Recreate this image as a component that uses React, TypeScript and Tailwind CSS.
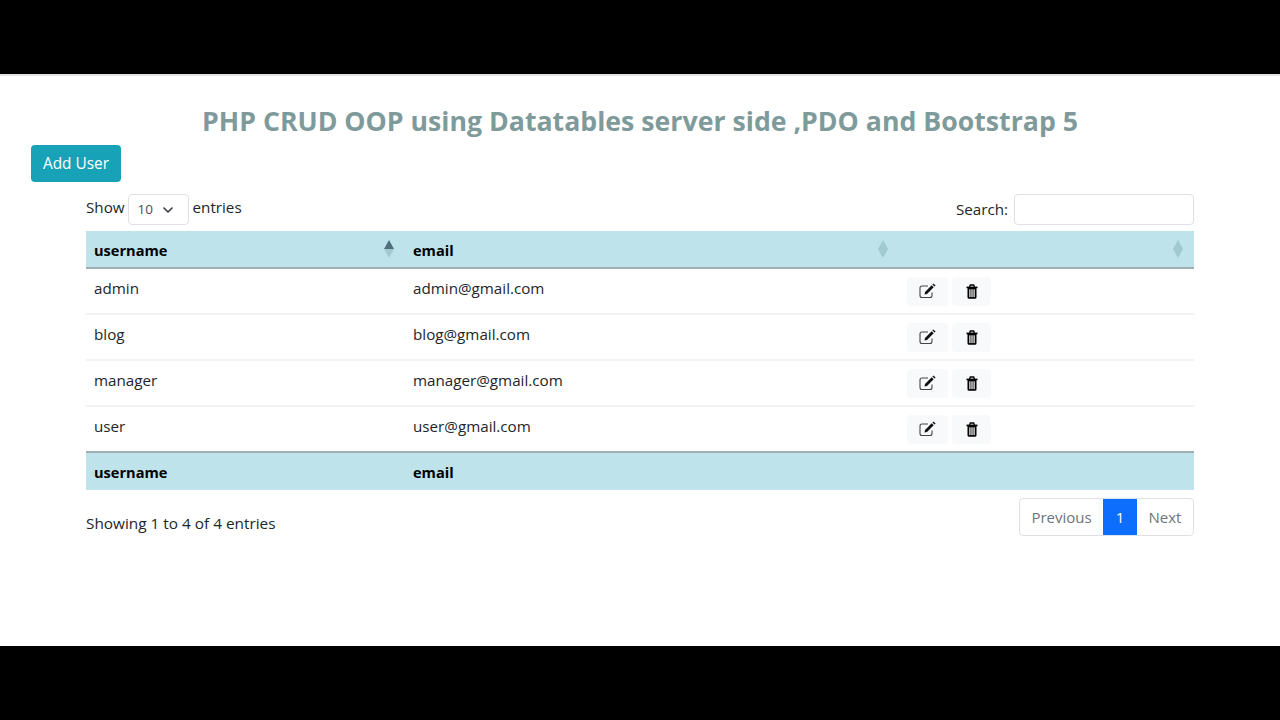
import { ChevronDown } from "lucide-react";

const users = [
  { name: "admin", email: "admin@gmail.com" },
  { name: "blog", email: "blog@gmail.com" },
  { name: "manager", email: "manager@gmail.com" },
  { name: "user", email: "user@gmail.com" },
];

function SortIcon({ active }: { active?: boolean }) {
  return (
    <svg width="10" height="18" viewBox="0 0 10 18" className="shrink-0">
      <path d="M5 0 L10 9 H0 Z" fill={active ? "#4f6f7c" : "#a1c9cf"} />
      <path d="M5 18 L10 9 H0 Z" fill={active ? "#a3c8d0" : "#a1c9cf"} />
    </svg>
  );
}

function EditIcon() {
  return (
    <svg width="18" height="16" viewBox="0 0 18 16" fill="none">
      <path
        d="M13 9.5 V12.5 A2 2 0 0 1 11 14.5 H3 A2 2 0 0 1 1 12.5 V5 A2 2 0 0 1 3 3 H9"
        stroke="#444"
        strokeWidth="1.1"
      />
      <path d="M6 9 L12.7 2.2 L14.7 4.2 L8 11 L5.5 11.5 Z" fill="#111" />
      <path d="M13.4 1.4 L14.4 0.4 L16.6 2.6 L15.6 3.5 Z" fill="#111" />
    </svg>
  );
}

function TrashIcon() {
  return (
    <svg width="12" height="15" viewBox="0 0 12 15">
      <path d="M3.6 3 L4.3 1 H7.7 L8.4 3" fill="none" stroke="#000" strokeWidth="1.3" />
      <rect x="0.5" y="2.6" width="11" height="1.6" fill="#000" />
      <path d="M1.5 4 H10.5 V13.2 A1.5 1.5 0 0 1 9 14.7 H3 A1.5 1.5 0 0 1 1.5 13.2 Z" fill="#000" />
      <rect x="3.3" y="5.3" width="1.2" height="7.8" fill="#fff" />
      <rect x="5.4" y="5.3" width="1.2" height="7.8" fill="#fff" />
      <rect x="7.5" y="5.3" width="1.2" height="7.8" fill="#fff" />
    </svg>
  );
}

function HeaderCell({ label, active }: { label?: string; active?: boolean }) {
  return (
    <th className="h-[37px] px-2 text-left text-[14.6px] font-bold text-black">
      <div className="flex items-center justify-between pr-[3px]">
        <span className="pt-[4px]">{label}</span>
        <SortIcon active={active} />
      </div>
    </th>
  );
}

export default function App() {
  return (
    <div className="flex h-screen flex-col overflow-hidden bg-black font-['Open_Sans','Liberation_Sans',sans-serif] text-[15.2px] text-[#212529]">
      <div className="h-[74px] shrink-0 bg-black" />
      <div className="flex-1 border-t-2 border-[#e4e4e4] bg-white">
        <h2 className="pt-[26px] text-center text-[26.7px] leading-[38px] font-bold text-[#7f9a9a]">
          PHP CRUD OOP using Datatables server side ,PDO and Bootstrap 5
        </h2>
        <div className="mt-[5px] pl-[31px]">
          <button className="h-[37px] w-[90px] rounded bg-[#17a2b8] pt-[1px] text-[15.4px] text-white">Add User</button>
        </div>

        <div className="mx-[86px] mt-3">
          <div className="flex h-[37px] items-start justify-between">
            <div className="flex items-center gap-[3px]">
              <span className="mb-[5px]">Show</span>
              <div className="flex h-[31px] w-[61px] items-center justify-between rounded border border-[#dee2e6] pr-[12px] pl-[9px] text-[13.5px] text-[#495057]">
                <span>10</span>
                <ChevronDown size={16} strokeWidth={2.4} className="text-[#343a40]" />
              </div>
              <span className="mb-[5px] ml-[1px]">entries</span>
            </div>
            <div className="flex items-center gap-[6px]">
              <span>Search:</span>
              <div className="h-[31px] w-[180px] rounded border border-[#dee2e6] bg-white" />
            </div>
          </div>

          <table className="w-full table-fixed border-collapse">
            <colgroup>
              <col className="w-[319px]" />
              <col className="w-[494px]" />
              <col />
            </colgroup>
            <thead>
              <tr className="border-b-2 border-[#9fb1b5] bg-[#bee3eb]">
                <HeaderCell label="username" active />
                <HeaderCell label="email" />
                <HeaderCell />
              </tr>
            </thead>
            <tbody>
              {users.map((u) => (
                <tr key={u.name} className="h-[46px] border-b-2 border-[#f1f2f3] last:border-b-0">
                  <td className="px-2 pb-[6px] align-middle">{u.name}</td>
                  <td className="px-2 pb-[6px] align-middle">{u.email}</td>
                  <td className="px-2 align-middle">
                    <div className="flex gap-1">
                      <button className="flex h-[29px] w-[41px] items-center justify-center rounded bg-[#f8f9fa]">
                        <EditIcon />
                      </button>
                      <button className="flex h-[29px] w-[39px] items-center justify-center rounded bg-[#f8f9fa]">
                        <TrashIcon />
                      </button>
                    </div>
                  </td>
                </tr>
              ))}
            </tbody>
            <tfoot>
              <tr className="h-[38px] border-t-2 border-[#9fb1b5] bg-[#bee3eb] text-[14.6px] font-bold text-black">
                <td className="px-2 pt-[3px]">username</td>
                <td className="px-2 pt-[3px]">email</td>
                <td className="px-2" />
              </tr>
            </tfoot>
          </table>

          <div className="mt-2 flex items-start justify-between">
            <span className="pt-[15px] text-[15.35px] leading-[20px]">Showing 1 to 4 of 4 entries</span>
            <div className="flex h-[38px] w-[175px] overflow-hidden rounded border border-[#dee2e6] text-[15px] text-[#6c757d]">
              <span className="flex flex-1 items-center justify-center pt-[1px]">Previous</span>
              <span className="flex w-[34px] items-center justify-center bg-[#0d6efd] pt-[1px] text-white">1</span>
              <span className="flex w-[56px] items-center justify-center pt-[1px]">Next</span>
            </div>
          </div>
        </div>
      </div>
      <div className="h-[74px] shrink-0 bg-black" />
    </div>
  );
}
